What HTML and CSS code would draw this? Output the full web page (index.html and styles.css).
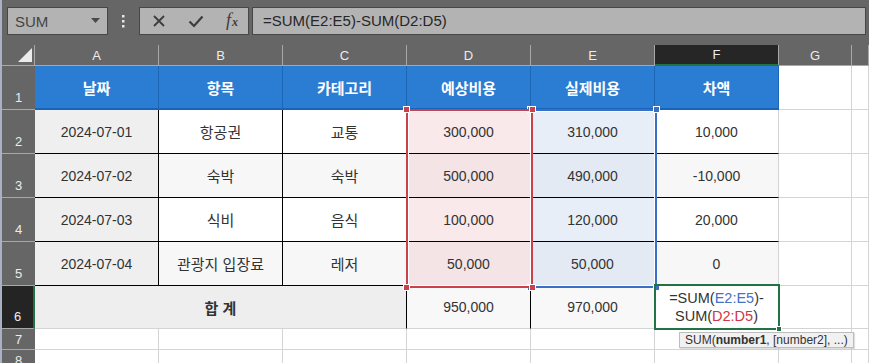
FILE: index.html
```html
<!DOCTYPE html>
<html lang="ko">
<head>
    <meta charset="UTF-8">
    <meta name="viewport" content="width=device-width, initial-scale=1.0">
    <title>여행 경비 - Excel</title>
    <link rel="stylesheet" href="styles.css">
</head>
<body>
    <div class="app">
        <!-- formula bar -->
        <div class="formula-bar">
            <div class="name-box">
                <span>SUM</span>
                <svg class="arrow" width="9" height="5" viewBox="0 0 9 5"><path d="M0 0h9L4.5 5z" fill="#4a4a4a"/></svg>
            </div>
            <div class="grip">
                <svg width="3" height="13" viewBox="0 0 3 13"><rect x="0" y="0" width="2.5" height="2.5" fill="#e6e6e6"/><rect x="0" y="5" width="2.5" height="2.5" fill="#e6e6e6"/><rect x="0" y="10" width="2.5" height="2.5" fill="#e6e6e6"/></svg>
            </div>
            <div class="fx-buttons">
                <svg width="14" height="14" viewBox="0 0 14 14"><path d="M2 2l10 10M12 2L2 12" stroke="#3d3d3d" stroke-width="1.8"/></svg>
                <svg width="16" height="14" viewBox="0 0 16 14"><path d="M1.5 7.5l4.5 4.5L14.5 2.5" stroke="#3d3d3d" stroke-width="2.2" fill="none"/></svg>
                <span class="fx"><i>f</i><small>x</small></span>
            </div>
            <div class="formula-input">=SUM(E2:E5)-SUM(D2:D5)</div>
        </div>

        <!-- sheet -->
        <div class="sheet">
            <div class="grid">
                <div class="corner"><span class="tri"></span></div>
                <div class="ch">A</div>
                <div class="ch">B</div>
                <div class="ch">C</div>
                <div class="ch">D</div>
                <div class="ch">E</div>
                <div class="ch sel">F</div>
                <div class="ch">G</div>
                <div class="ch"></div>

                <div class="rh">1</div>
                <div class="c head">날짜</div>
                <div class="c head">항목</div>
                <div class="c head">카테고리</div>
                <div class="c head">예상비용</div>
                <div class="c head">실제비용</div>
                <div class="c head">차액</div>
                <div class="c empty"></div>
                <div class="c empty"></div>

                <div class="rh">2</div>
                <div class="c date">2024-07-01</div>
                <div class="c ko">항공권</div>
                <div class="c ko">교통</div>
                <div class="c est">300,000</div>
                <div class="c act">310,000</div>
                <div class="c diff">10,000</div>
                <div class="c empty"></div>
                <div class="c empty"></div>

                <div class="rh">3</div>
                <div class="c date">2024-07-02</div>
                <div class="c ko alt">숙박</div>
                <div class="c ko alt">숙박</div>
                <div class="c est alt">500,000</div>
                <div class="c act alt">490,000</div>
                <div class="c diff alt">-10,000</div>
                <div class="c empty"></div>
                <div class="c empty"></div>

                <div class="rh">4</div>
                <div class="c date">2024-07-03</div>
                <div class="c ko">식비</div>
                <div class="c ko">음식</div>
                <div class="c est">100,000</div>
                <div class="c act">120,000</div>
                <div class="c diff">20,000</div>
                <div class="c empty"></div>
                <div class="c empty"></div>

                <div class="rh">5</div>
                <div class="c date">2024-07-04</div>
                <div class="c ko alt">관광지 입장료</div>
                <div class="c ko alt">레저</div>
                <div class="c est alt">50,000</div>
                <div class="c act alt">50,000</div>
                <div class="c diff alt">0</div>
                <div class="c empty"></div>
                <div class="c empty"></div>

                <div class="rh sel">6</div>
                <div class="c total">합 계</div>
                <div class="c sum">950,000</div>
                <div class="c sum">970,000</div>
                <div class="c editing">
                    <span>=SUM(<b class="ref-e">E2:E5</b>)-</span>
                    <span>SUM(<b class="ref-d">D2:D5</b>)</span>
                </div>
                <div class="c empty"></div>
                <div class="c empty"></div>

                <div class="rh small">7</div>
                <div class="c empty"></div>
                <div class="c empty"></div>
                <div class="c empty"></div>
                <div class="c empty"></div>
                <div class="c empty"></div>
                <div class="c empty"></div>
                <div class="c empty"></div>
                <div class="c empty"></div>

                <div class="rh small">8</div>
                <div class="c empty"></div>
                <div class="c empty"></div>
                <div class="c empty"></div>
                <div class="c empty"></div>
                <div class="c empty"></div>
                <div class="c empty"></div>
                <div class="c empty"></div>
                <div class="c empty"></div>
            </div>

            <!-- range highlights of the formula being edited -->
            <div class="range range-e">
                <span class="handle tl"></span><span class="handle tr"></span>
                <span class="handle bl"></span><span class="handle br"></span>
            </div>
            <div class="range range-d">
                <span class="handle tl"></span><span class="handle tr"></span>
                <span class="handle bl"></span><span class="handle br"></span>
            </div>
            <div class="active-cell"><span class="fill-handle"></span></div>

            <div class="tooltip">SUM(<b>number1</b>, [number2], ...)</div>
        </div>
    </div>
</body>
</html>
```

FILE: styles.css
```css
body {
    margin: 0;
    padding: 0;
    background-color: #666;
    font-family: "Liberation Sans", "Noto Sans CJK KR", sans-serif;
    overflow: hidden;
}
.app {
    height: 363px;
    border-left: 2px solid #a9b2c4;
    background-color: #666;
}

/* formula bar */
.formula-bar {
    display: flex;
    align-items: flex-start;
    height: 45px;
    padding-top: 7px;
    box-sizing: border-box;
}
.name-box {
    display: flex;
    align-items: center;
    justify-content: space-between;
    width: 101px;
    height: 28px;
    margin-left: 5px;
    padding: 0 7px 0 7px;
    box-sizing: border-box;
    background-color: #b3b3b3;
    border: 1px solid #474747;
    color: #444;
    font-size: 15px;
}
.name-box .arrow {
    margin-top: -2px;
}
.grip {
    width: 31px;
    display: flex;
    justify-content: center;
    padding-top: 8px;
}
.fx-buttons {
    display: flex;
    align-items: center;
    justify-content: space-between;
    width: 110px;
    height: 28px;
    padding: 0 10px 0 12px;
    box-sizing: border-box;
    background-color: #b3b3b3;
    border: 1px solid #474747;
}
.fx {
    font-family: "Liberation Serif", serif;
    color: #3d3d3d;
    font-size: 18px;
    line-height: 18px;
}
.fx i {
    font-style: italic;
}
.fx small {
    font-size: 12px;
    font-style: italic;
    font-weight: bold;
    margin-left: 1px;
}
.formula-input {
    flex: 1;
    height: 28px;
    margin-left: 3px;
    margin-right: 3px;
    padding-left: 10px;
    box-sizing: border-box;
    background-color: #b3b3b3;
    border: 1px solid #474747;
    color: #262626;
    font-size: 15px;
    line-height: 26px;
}

/* sheet grid */
.sheet {
    position: relative;
    height: 318px;
    overflow: hidden;
}
.grid {
    display: grid;
    grid-template-columns: 33px repeat(6, 124px) 73px 1fr;
    grid-template-rows: 21px repeat(5, 44px) 43px 21px 21px;
    background-color: #fff;
}
.grid > div {
    box-sizing: border-box;
    display: flex;
    align-items: center;
    justify-content: center;
}
.corner {
    position: relative;
    background-color: #666;
    border-right: 1px solid #a8a8a8;
    border-bottom: 1px solid #a8a8a8;
}
.corner .tri {
    position: absolute;
    right: 2px;
    bottom: 3px;
    width: 0;
    height: 0;
    border-left: 14px solid transparent;
    border-bottom: 14px solid #ececec;
}
.ch {
    background-color: #666;
    color: #ececec;
    font-size: 13px;
    border-right: 1px solid #a8a8a8;
    border-bottom: 1px solid #a8a8a8;
}
.ch.sel {
    background-color: #262626;
    border-bottom: 2px solid #217346;
}
.rh {
    background-color: #666;
    color: #ececec;
    font-size: 13px;
    border-bottom: 1px solid #a8a8a8;
    align-items: flex-end !important;
    padding-bottom: 4px;
}
.rh.sel {
    background-color: #242424;
    border-right: 2px solid #217346;
}
.rh.small {
    padding-bottom: 2px;
}

.c {
    color: #333;
    font-size: 14px;
    background-color: #fff;
    border-right: 1px solid #000;
    border-bottom: 1px solid #000;
}
.c.ko {
    font-size: 15px;
}
.c.alt {
    background-color: #f7f7f7;
}
.c.head {
    background-color: #2a7dd2;
    color: #fff;
    font-size: 15px;
    font-weight: bold;
    border-right: 1px solid #1c66b8;
    border-bottom: 2px solid #1864bd;
}
.c.date {
    background-color: #efefef;
}
.c.est {
    background-color: #f9e9ea;
}
.c.est.alt {
    background-color: #f4e4e5;
}
.c.act {
    background-color: #e8eef8;
}
.c.act.alt {
    background-color: #e3eaf4;
}
.c.diff {
    border-right-color: #d4d4d4;
}
.c.empty {
    border-right: 1px solid #d4d4d4;
    border-bottom: 1px solid #d4d4d4;
}
.c.total {
    grid-column: span 3;
    background-color: #eeeeee;
    font-size: 15px;
    font-weight: bold;
    border-bottom-color: #d4d4d4;
}
.c.sum {
    background-color: #f8f8f8;
    border-bottom-color: #d4d4d4;
}
.c.editing {
    flex-direction: column;
    font-size: 14.5px;
    line-height: 18px;
    border-right-color: #d4d4d4;
    border-bottom-color: #d4d4d4;
}
.c.editing b {
    font-weight: normal;
}
.ref-e {
    color: #4472c4;
}
.ref-d {
    color: #d03543;
}

/* overlays */
.range {
    position: absolute;
    top: 64px;
    height: 179px;
    box-sizing: border-box;
    box-shadow: inset 0 0 0 1px #fff;
}
.range-d {
    left: 404px;
    width: 127px;
    border: 2px solid #c8414b;
}
.range-e {
    left: 528px;
    width: 127px;
    border: 2px solid #3a6fc6;
}
.handle {
    position: absolute;
    width: 5px;
    height: 5px;
    border: 1px solid #fff;
}
.range-d .handle {
    background-color: #c8414b;
}
.range-e .handle {
    background-color: #3a6fc6;
}
.handle.tl { left: -5px; top: -5px; }
.handle.tr { right: -5px; top: -5px; }
.handle.bl { left: -5px; bottom: -5px; }
.handle.br { right: -5px; bottom: -5px; }

.active-cell {
    position: absolute;
    left: 652px;
    top: 239px;
    width: 126px;
    height: 46px;
    box-sizing: border-box;
    border: 2px solid #217346;
}
.fill-handle {
    position: absolute;
    right: -4px;
    bottom: -4px;
    width: 4px;
    height: 4px;
    background-color: #217346;
    border: 1px solid #fff;
}
.tooltip {
    position: absolute;
    left: 677px;
    top: 287px;
    height: 16px;
    padding: 0 5px;
    box-sizing: border-box;
    background-color: #f1f1f1;
    border: 1px solid #bdbdbd;
    box-shadow: 1px 1px 1px rgba(0, 0, 0, 0.12);
    color: #333;
    font-size: 12px;
    line-height: 14px;
    white-space: nowrap;
}
```
